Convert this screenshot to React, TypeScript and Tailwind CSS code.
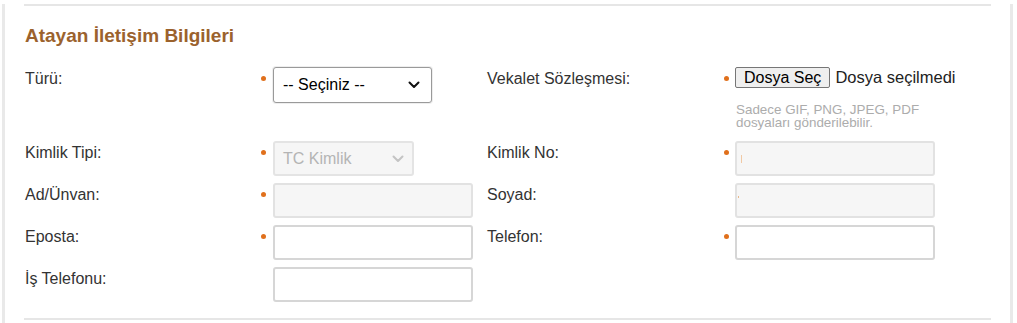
import React from 'react';

const font = { fontFamily: '"Liberation Sans", Arial, sans-serif' };

function Dot({ show = true }: { show?: boolean }) {
  return (
    <div className="pt-[9px] pl-[3px]">
      {show && <div className="w-[5px] h-[5px] rounded-full bg-[#e0701c]" />}
    </div>
  );
}

function Label({ children }: { children: React.ReactNode }) {
  return <div className="pt-[3px] text-[16px] leading-[18px] text-[#333]">{children}</div>;
}

function TextInput({ disabled = false, mark }: { disabled?: boolean; mark?: 'bar' | 'dot' }) {
  return (
    <div
      className={
        'relative w-[200px] h-[35px] rounded-[3px] border-2 ' +
        (disabled ? 'bg-[#f6f6f6] border-[#e2e2e2]' : 'bg-white border-[#d6d6d6]')
      }
    >
      {mark === 'bar' && <div className="absolute left-[4px] top-[12px] w-px h-[8px] bg-[#f1c9a4]" />}
      {mark === 'dot' && <div className="absolute left-[1px] top-[11px] w-px h-[2px] bg-[#e8b88a]" />}
    </div>
  );
}

function Chevron({ color }: { color: string }) {
  return (
    <svg width="12" height="8" viewBox="0 0 12 8" fill="none">
      <path d="M1.5 1.5 6 6l4.5-4.5" stroke={color} strokeWidth="2" strokeLinecap="round" strokeLinejoin="round" />
    </svg>
  );
}

export default function App() {
  return (
    <div className="w-[1017px] h-[323px] bg-white overflow-hidden" style={font}>
      <div className="ml-[2px] w-[1011px] h-[323px] border-x-[3px] border-[#e9e9e9] pl-[19px] pr-[19px]">
        <div className="mt-[4px] h-[2px] bg-[#e6e6e6]" />

        <h2 className="mt-[18px] pl-[1px] text-[19px] leading-[24px] font-bold text-[#9b622d]">
          Atayan İletişim Bilgileri
        </h2>

        <div className="mt-[19px] pl-[1px] grid grid-cols-[233px_15px_214px_234px_14px_200px] gap-y-[7px]">
          {/* row 1 */}
          <Label>Türü:</Label>
          <Dot />
          <div>
            <div className="w-[159px] h-[36px] rounded-[3px] border border-[#9a9a9a] bg-white flex items-center justify-between pl-[9px] pr-[11px] shadow-[0_0_0_1px_#eeeeee]">
              <span className="text-[16px] text-black">-- Seçiniz --</span>
              <Chevron color="#111" />
            </div>
          </div>
          <Label>Vekalet Sözleşmesi:</Label>
          <Dot />
          <div className="pb-[5px]">
            <div className="flex items-center h-[21px] whitespace-nowrap">
              <div className="h-[21px] px-[8px] flex items-center border border-[#767676] rounded-[2px] bg-[#efefef] text-[16px] text-black shrink-0">
                Dosya Seç
              </div>
              <span className="ml-[5px] text-[16.5px] text-[#222]">Dosya seçilmedi</span>
            </div>
            <div className="mt-[15px] pl-[1px] text-[13.4px] leading-[13px] text-[#acacac] whitespace-nowrap">
              Sadece GIF, PNG, JPEG, PDF
              <br />
              dosyaları gönderilebilir.
            </div>
          </div>

          {/* row 2 */}
          <Label>Kimlik Tipi:</Label>
          <Dot />
          <div>
            <div className="w-[141px] h-[35px] rounded-[3px] border-2 border-[#e4e4e4] bg-[#f6f6f6] flex items-center justify-between pl-[8px] pr-[8px]">
              <span className="text-[16px] text-[#b4b4b4]">TC Kimlik</span>
              <Chevron color="#c4c4c4" />
            </div>
          </div>
          <Label>Kimlik No:</Label>
          <Dot />
          <TextInput disabled mark="bar" />

          {/* row 3 */}
          <Label>Ad/Ünvan:</Label>
          <Dot />
          <TextInput disabled />
          <Label>Soyad:</Label>
          <Dot show={false} />
          <TextInput disabled mark="dot" />

          {/* row 4 */}
          <Label>Eposta:</Label>
          <Dot />
          <TextInput />
          <Label>Telefon:</Label>
          <Dot />
          <TextInput />

          {/* row 5 */}
          <Label>İş Telefonu:</Label>
          <Dot show={false} />
          <TextInput />
          <div />
          <div />
          <div />
        </div>

        <div className="mt-[16px] h-[2px] bg-[#e6e6e6]" />
      </div>
    </div>
  );
}
